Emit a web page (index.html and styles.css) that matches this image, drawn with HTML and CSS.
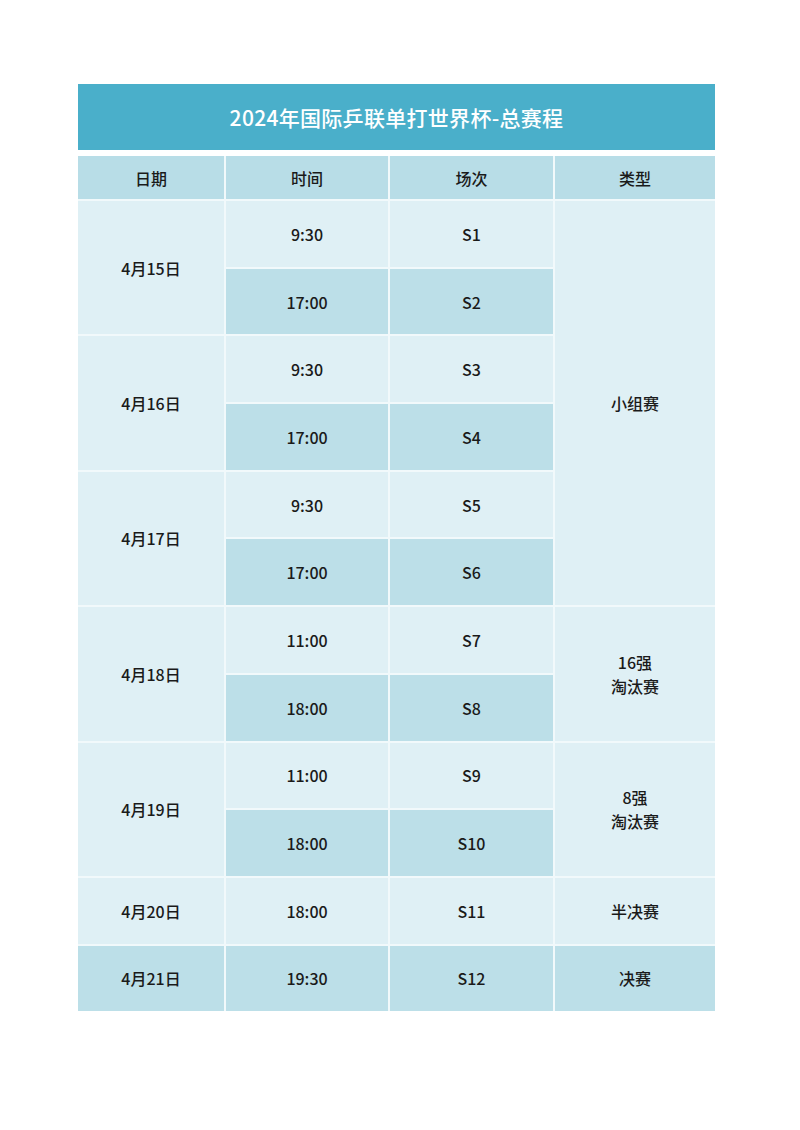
FILE: index.html
```html
<!DOCTYPE html>
<html lang="zh-CN">
<head>
<meta charset="utf-8">
<title>2024年国际乒联单打世界杯-总赛程</title>
<link rel="stylesheet" href="styles.css">
</head>
<body>
<div class="sheet">
  <div class="title">2024年国际乒联单打世界杯-总赛程</div>
  <div class="grid">
    <div class="cell head">日期</div>
    <div class="cell head">时间</div>
    <div class="cell head">场次</div>
    <div class="cell head">类型</div>

    <div class="cell light date r2">4月15日</div>
    <div class="cell light">9:30</div>
    <div class="cell light">S1</div>
    <div class="cell light type r6">小组赛</div>
    <div class="cell dark">17:00</div>
    <div class="cell dark">S2</div>

    <div class="cell light date r2">4月16日</div>
    <div class="cell light">9:30</div>
    <div class="cell light">S3</div>
    <div class="cell dark">17:00</div>
    <div class="cell dark">S4</div>

    <div class="cell light date r2">4月17日</div>
    <div class="cell light">9:30</div>
    <div class="cell light">S5</div>
    <div class="cell dark">17:00</div>
    <div class="cell dark">S6</div>

    <div class="cell light date r2">4月18日</div>
    <div class="cell light">11:00</div>
    <div class="cell light">S7</div>
    <div class="cell light type r2">16强<br>淘汰赛</div>
    <div class="cell dark">18:00</div>
    <div class="cell dark">S8</div>

    <div class="cell light date r2">4月19日</div>
    <div class="cell light">11:00</div>
    <div class="cell light">S9</div>
    <div class="cell light type r2">8强<br>淘汰赛</div>
    <div class="cell dark">18:00</div>
    <div class="cell dark">S10</div>

    <div class="cell light">4月20日</div>
    <div class="cell light">18:00</div>
    <div class="cell light">S11</div>
    <div class="cell light">半决赛</div>

    <div class="cell dark">4月21日</div>
    <div class="cell dark">19:30</div>
    <div class="cell dark">S12</div>
    <div class="cell dark">决赛</div>
  </div>
</div>
</body>
</html>
```

FILE: styles.css
```css
html, body {
  margin: 0;
  padding: 0;
  background: #ffffff;
}
body {
  font-family: "Noto Sans CJK SC", "Noto Sans", sans-serif;
  color: #1a1a1a;
}
.sheet {
  width: 637px;
  margin: 84px 0 0 78px;
}
.title {
  height: 66px;
  background: #4aafca;
  color: #ffffff;
  font-size: 21px;
  font-weight: 500;
  display: flex;
  align-items: center;
  justify-content: center;
  letter-spacing: 0.3px;
}
.grid {
  margin-top: 6px;
  display: grid;
  grid-template-columns: 146px 162px 163px 160px;
  grid-template-rows: 43px;
  grid-auto-rows: 65.7px;
  gap: 2px;
  background: #f1f9fb;
}
.cell {
  display: flex;
  align-items: center;
  justify-content: center;
  text-align: center;
  font-size: 16px;
  font-weight: 500;
  line-height: 1.5;
}
.head {
  background: #b8dde7;
}
.light {
  background: #dff0f5;
}
.dark {
  background: #bcdfe8;
}
.r2 {
  grid-row: span 2;
}
.r6 {
  grid-row: span 6;
}
.date { grid-column: 1; }
.type { grid-column: 4; }
```
